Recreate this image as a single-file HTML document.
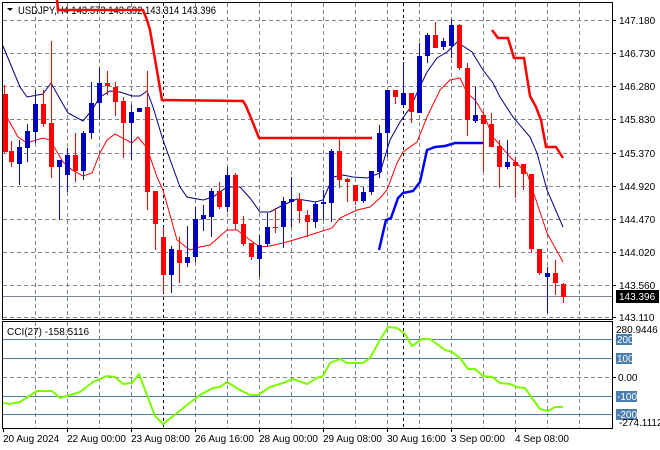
<!DOCTYPE html>
<html><head><meta charset="utf-8"><style>
html,body{margin:0;padding:0;background:#fff;}
svg{display:block;font-family:"Liberation Sans",sans-serif;}
</style></head><body>
<svg width="660" height="450" viewBox="0 0 660 450" xmlns="http://www.w3.org/2000/svg">
<rect width="660" height="450" fill="#fff"/>
<g stroke="#7a8696" stroke-width="1" stroke-dasharray="4,3" fill="none">
<path d="M3 20.5H612M3 53.5H612M3 86.5H612M3 119.5H612M3 153.5H612M3 186.5H612M3 219.5H612M3 252.5H612M3 285.5H612M3 317.5H612"/>
<path d="M35.5 3V319M67.5 3V319M99.5 3V319M131.5 3V319M195.5 3V319M227.5 3V319M259.5 3V319M291.5 3V319M323.5 3V319M355.5 3V319M387.5 3V319M419.5 3V319M451.5 3V319M483.5 3V319M515.5 3V319M547.5 3V319M579.5 3V319"/>
<path d="M35.5 322V428M67.5 322V428M99.5 322V428M131.5 322V428M195.5 322V428M227.5 322V428M259.5 322V428M291.5 322V428M323.5 322V428M355.5 322V428M387.5 322V428M419.5 322V428M451.5 322V428M483.5 322V428M515.5 322V428M547.5 322V428M579.5 322V428"/>
<path d="M3 377.5H612"/>
</g>
<g stroke="#000" stroke-dasharray="3,3"><path d="M163.5 3V319M403.5 3V319M163.5 322V428M403.5 322V428"/></g>
<path d="M3 296.5H612" stroke="#7a8696"/>
<g stroke="#4a7fb0"><path d="M3 339.5H612M3 358.5H612M3 396.5H612M3 414.5H612"/></g>
<g fill="none" stroke="#000"><rect x="2.5" y="2.5" width="610" height="317"/><rect x="2.5" y="321.5" width="610" height="107"/></g>

<polygon points="7,8 13,8 10,11" fill="#000"/>
<text x="18" y="14" font-size="11" fill="#000" textLength="198" lengthAdjust="spacingAndGlyphs">USDJPY,H4  143.573 143.592 143.314 143.396</text>

<polyline fill="none" stroke="#f00" stroke-width="2.5" points="57,0 58,10 143,10 147,20 150,30 162,100 243,101 246,106 251,118 259,138 372,138"/>
<polyline fill="none" stroke="#f00" stroke-width="2.5" points="492,30 498,38 508,38 514,58 524,58 530,96 536,107 541,120 546,147 556,147 563,158"/>
<polyline fill="none" stroke="#0000ff" stroke-width="2.5" points="379,250 386,220 391,218 398,198 403,193 413,191 420,182 427,150 435,147 445,146 455,143 483,143"/>
<polyline fill="none" stroke="#000080" stroke-width="1" points="3,46 20,87 27,97 43,94 51,83 68,113 83,121 92,110 100,97 110,91 120,92 132,96 140,96 147,91 153,107 163,140 180,187 187,197 203,200 213,197 227,187 240,187 250,198 260,212 270,212 283,205 297,199 310,201 315,202 323,200 333,177 343,175 353,177 367,178 380,173 390,140 400,122 410,108 417,93 427,72 437,58 447,52 457,42 472,52 483,70 493,83 500,97 513,117 530,137 537,153 547,190 563,227"/>
<polyline fill="none" stroke="#f00" stroke-width="1" points="3,110 18,137 27,143 43,138 50,140 63,162 72,170 83,176 92,173 100,153 107,140 115,134 132,143 138,137 147,148 157,177 163,190 177,240 190,250 200,247 210,245 227,230 237,230 250,240 260,247 270,246 283,243 297,239 310,235 332,228 340,218 357,210 370,207 380,198 387,190 397,163 403,152 417,142 427,117 440,90 450,80 460,78 467,93 475,100 483,113 493,137 510,157 527,173 537,203 547,233 563,262"/>

<g stroke="#f00" fill="#f00">
<path d="M4.5 85V153M11.5 141V167M43.5 90V127M51.5 41V178M75.5 133V182M107.5 71V95M115.5 82V116M123.5 97V158M147.5 71V210M155.5 191V250M163.5 227V293M179.5 237V283M219.5 182V209M235.5 173V230M243.5 216V246M251.5 243V260M275.5 208V233M299.5 193V223M307.5 210V237M339.5 138V188M347.5 178V202M355.5 185V205M395.5 90V104M411.5 93V123M435.5 22V48M459.5 24V70M467.5 63V136M483.5 112V172M491.5 113V147M499.5 140V188M515.5 157V198M523.5 164V190M531.5 174V253M539.5 249V275M555.5 260V295M563.5 283V303" stroke-width="1" fill="none"/>
<g stroke="none">
<rect x="3" y="94" width="5" height="58"/><rect x="9" y="151" width="5" height="11"/><rect x="41" y="104" width="5" height="20"/><rect x="49" y="123" width="5" height="44"/><rect x="73" y="155" width="5" height="16"/><rect x="105" y="83" width="5" height="3"/><rect x="113" y="87" width="5" height="15"/><rect x="121" y="101" width="5" height="22"/><rect x="145" y="107" width="5" height="85"/><rect x="153" y="191" width="5" height="33"/><rect x="161" y="237" width="5" height="38"/><rect x="177" y="250" width="5" height="13"/><rect x="217" y="191" width="5" height="16"/><rect x="233" y="175" width="5" height="49"/><rect x="241" y="224" width="5" height="20"/><rect x="249" y="243" width="5" height="14"/><rect x="273" y="227" width="5" height="1"/><rect x="297" y="199" width="5" height="12"/><rect x="305" y="215" width="5" height="7"/><rect x="337" y="151" width="5" height="29"/><rect x="345" y="179" width="5" height="3"/><rect x="353" y="185" width="5" height="16"/><rect x="393" y="90" width="5" height="7"/><rect x="409" y="93" width="5" height="19"/><rect x="433" y="35" width="5" height="13"/><rect x="457" y="25" width="5" height="43"/><rect x="465" y="68" width="5" height="52"/><rect x="481" y="115" width="5" height="9"/><rect x="489" y="124" width="5" height="23"/><rect x="497" y="146" width="5" height="21"/><rect x="513" y="162" width="5" height="4"/><rect x="521" y="164" width="5" height="10"/><rect x="529" y="174" width="5" height="75"/><rect x="537" y="249" width="5" height="24"/><rect x="553" y="273" width="5" height="10"/><rect x="561" y="284" width="5" height="13"/>
</g></g>
<g fill="#0000c0">
<path d="M19.5 140V185M27.5 124V162M35.5 90V143M59.5 160V220M67.5 148V192M83.5 131V180M91.5 82V139M99.5 68V120M131.5 105V160M171.5 246V293M187.5 226V267M195.5 207V262M203.5 205V231M211.5 188V237M227.5 167V212M259.5 235V277M267.5 213V247M283.5 197V248M291.5 177V227M315.5 202V228M323.5 190V220M331.5 149V222M363.5 187V203M371.5 171V195M379.5 125V178M387.5 90V157M403.5 62V107M419.5 43V113M427.5 33V63M443.5 38V50M451.5 19V58M475.5 87V123M507.5 140V169M547.5 267V313" stroke="#0000ff" fill="none"/>
<rect x="17" y="147" width="5" height="17"/><rect x="25" y="131" width="5" height="17"/><rect x="33" y="104" width="5" height="28"/><rect x="57" y="160" width="5" height="7"/><rect x="65" y="155" width="5" height="20"/><rect x="81" y="133" width="5" height="38"/><rect x="89" y="103" width="5" height="30"/><rect x="97" y="83" width="5" height="20"/><rect x="129" y="112" width="5" height="11"/><rect x="137" y="108" width="5" height="4"/><rect x="169" y="249" width="5" height="26"/><rect x="185" y="257" width="5" height="6"/><rect x="193" y="219" width="5" height="38"/><rect x="201" y="215" width="5" height="4"/><rect x="209" y="191" width="5" height="26"/><rect x="225" y="175" width="5" height="32"/><rect x="257" y="245" width="5" height="14"/><rect x="265" y="227" width="5" height="17"/><rect x="281" y="201" width="5" height="26"/><rect x="289" y="199" width="5" height="3"/><rect x="313" y="204" width="5" height="18"/><rect x="321" y="202" width="5" height="2"/><rect x="329" y="151" width="5" height="52"/><rect x="361" y="192" width="5" height="9"/><rect x="369" y="171" width="5" height="21"/><rect x="377" y="133" width="5" height="39"/><rect x="385" y="90" width="5" height="43"/><rect x="401" y="93" width="5" height="12"/><rect x="417" y="56" width="5" height="57"/><rect x="425" y="35" width="5" height="21"/><rect x="441" y="41" width="5" height="6"/><rect x="449" y="25" width="5" height="21"/><rect x="473" y="115" width="5" height="6"/><rect x="505" y="162" width="5" height="5"/><rect x="545" y="273" width="5" height="4"/>
</g>

<polyline fill="none" stroke="#7cfc00" stroke-width="2" points="3,403 10,404 20,402 37,391 52,391 60,398 70,395 80,392 93,382 107,376 115,377 123,384 132,383 139,374 155,416 163,424 177,413 187,405 200,395 213,388 220,387 227,382 240,390 250,395 258,395 270,387 283,383 293,379 307,384 317,378 323,376 330,363 340,359 347,363 363,363 370,358 380,340 388,327 397,328 405,334 412,346 422,339 430,339 445,350 452,352 460,358 468,369 475,369 483,376 492,377 500,383 510,384 517,387 525,388 532,398 540,409 548,411 555,407 563,407"/>

<text x="7" y="335" font-size="10" fill="#000">CCI(27) -158.5116</text>

<g font-size="10" fill="#000">
<g stroke="#000"><path d="M612 20.5h4M612 53.5h4M612 86.5h4M612 119.5h4M612 153.5h4M612 186.5h4M612 219.5h4M612 252.5h4M612 285.5h4M612 317.5h4M612 377.5h4"/></g>
<text x="619" y="24">147.180</text><text x="619" y="57">146.730</text><text x="619" y="90">146.280</text><text x="619" y="123">145.830</text><text x="619" y="157">145.370</text><text x="619" y="190">144.920</text><text x="619" y="223">144.470</text><text x="619" y="256">144.020</text><text x="619" y="289">143.560</text><text x="619" y="321">143.110</text>
<rect x="616" y="290" width="43" height="13" fill="#000"/>
<text x="619" y="300" fill="#fff">143.396</text>
<text x="616" y="333">280.9446</text>
<rect x="616" y="334" width="16" height="11" fill="#4a7fb0"/><text x="617" y="343" fill="#fff">200</text>
<rect x="616" y="353" width="16" height="11" fill="#4a7fb0"/><text x="617" y="362" fill="#fff">100</text>
<text x="618" y="381">0.00</text>
<rect x="616" y="391" width="21" height="11" fill="#4a7fb0"/><text x="617" y="400" fill="#fff">-100</text>
<rect x="616" y="409" width="21" height="11" fill="#4a7fb0"/><text x="617" y="418" fill="#fff">-200</text>
<text x="619" y="426">-274.1112</text>
</g>
<g stroke="#000"><path d="M3.5 428v4M67.5 428v4M131.5 428v4M195.5 428v4M259.5 428v4M323.5 428v4M387.5 428v4M451.5 428v4M515.5 428v4"/></g>
<g font-size="10" fill="#000">
<text x="3" y="442">20 Aug 2024</text><text x="67" y="442">22 Aug 00:00</text><text x="131" y="442">23 Aug 08:00</text><text x="195" y="442">26 Aug 16:00</text><text x="259" y="442">28 Aug 00:00</text><text x="323" y="442">29 Aug 08:00</text><text x="387" y="442">30 Aug 16:00</text><text x="451" y="442">3 Sep 00:00</text><text x="515" y="442">4 Sep 08:00</text>
</g>
</svg>
</body></html>
